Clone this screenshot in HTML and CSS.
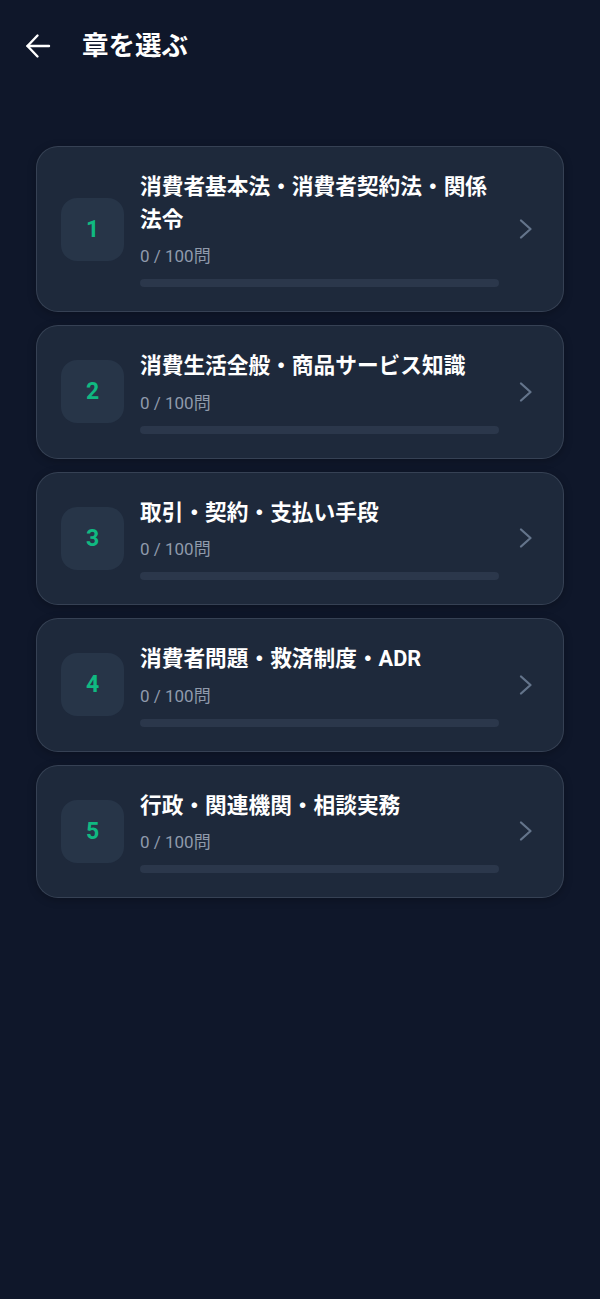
FILE: index.html
```html
<!DOCTYPE html>
<html lang="ja">
<head>
<meta charset="utf-8">
<title>章を選ぶ</title>
<link rel="stylesheet" href="styles.css">
</head>
<body>
<header class="topbar">
  <svg class="back" width="26" height="26" viewBox="0 0 26 26" fill="none" stroke="#ffffff" stroke-width="2.4" stroke-linecap="round" stroke-linejoin="round">
    <path d="M2.5 13H24"/>
    <path d="M12.5 2.5L2.5 13L12.5 23.5"/>
  </svg>
  <h1 class="title">章を選ぶ</h1>
</header>
<main class="list">
  <div class="card">
    <div class="num">1</div>
    <div class="info">
      <div class="name">消費者基本法・消費者契約法・関係法令</div>
      <div class="count">0 / 100問</div>
      <div class="bar"></div>
    </div>
    <svg class="chev" width="24" height="24" viewBox="0 0 24 24" fill="none" stroke="#64748b" stroke-width="2.3" stroke-linecap="round" stroke-linejoin="round"><path d="M6 3.5L15.5 12L6 20.5"/></svg>
  </div>
  <div class="card">
    <div class="num">2</div>
    <div class="info">
      <div class="name">消費生活全般・商品サービス知識</div>
      <div class="count">0 / 100問</div>
      <div class="bar"></div>
    </div>
    <svg class="chev" width="24" height="24" viewBox="0 0 24 24" fill="none" stroke="#64748b" stroke-width="2.3" stroke-linecap="round" stroke-linejoin="round"><path d="M6 3.5L15.5 12L6 20.5"/></svg>
  </div>
  <div class="card">
    <div class="num">3</div>
    <div class="info">
      <div class="name">取引・契約・支払い手段</div>
      <div class="count">0 / 100問</div>
      <div class="bar"></div>
    </div>
    <svg class="chev" width="24" height="24" viewBox="0 0 24 24" fill="none" stroke="#64748b" stroke-width="2.3" stroke-linecap="round" stroke-linejoin="round"><path d="M6 3.5L15.5 12L6 20.5"/></svg>
  </div>
  <div class="card">
    <div class="num">4</div>
    <div class="info">
      <div class="name">消費者問題・救済制度・ADR</div>
      <div class="count">0 / 100問</div>
      <div class="bar"></div>
    </div>
    <svg class="chev" width="24" height="24" viewBox="0 0 24 24" fill="none" stroke="#64748b" stroke-width="2.3" stroke-linecap="round" stroke-linejoin="round"><path d="M6 3.5L15.5 12L6 20.5"/></svg>
  </div>
  <div class="card">
    <div class="num">5</div>
    <div class="info">
      <div class="name">行政・関連機関・相談実務</div>
      <div class="count">0 / 100問</div>
      <div class="bar"></div>
    </div>
    <svg class="chev" width="24" height="24" viewBox="0 0 24 24" fill="none" stroke="#64748b" stroke-width="2.3" stroke-linecap="round" stroke-linejoin="round"><path d="M6 3.5L15.5 12L6 20.5"/></svg>
  </div>
</main>
</body>
</html>
```
FILE: styles.css
```css
html, body {
  margin: 0;
  padding: 0;
}
body {
  background: #0f172a;
  min-height: 1299px;
  font-family: Roboto, "Noto Sans", "Noto Sans CJK JP", sans-serif;
  color: #ffffff;
}
.topbar {
  height: 92px;
  display: flex;
  align-items: center;
  padding-left: 25px;
  gap: 31px;
}
.back {
  display: block;
  flex: none;
}
.title {
  margin: 0;
  font-size: 26.5px;
  font-weight: 700;
  line-height: 1;
  font-family: Roboto, "Noto Sans CJK JP", sans-serif;
}
.list {
  margin-top: 54px;
  padding: 0 36px;
  display: flex;
  flex-direction: column;
  gap: 13px;
}
.card {
  background: #1e293b;
  border: 1px solid rgba(148, 163, 184, 0.2);
  border-radius: 22px;
  padding: 24px;
  display: flex;
  align-items: center;
  gap: 16px;
  box-shadow: 0 2px 8px rgba(0, 0, 0, 0.25);
}
.num {
  flex: none;
  width: 63px;
  height: 63px;
  border-radius: 16px;
  background: #273548;
  display: flex;
  align-items: center;
  justify-content: center;
  color: #10b981;
  font-size: 23px;
  font-weight: 700;
}
.info {
  flex: 1;
  min-width: 0;
}
.name {
  font-size: 21.7px;
  font-weight: 700;
  line-height: 32.5px;
  color: #ffffff;
  font-family: Roboto, "Noto Sans CJK JP", sans-serif;
}
.count {
  margin-top: 9px;
  font-size: 17px;
  line-height: 22px;
  color: #8f9aab;
}
.bar {
  margin-top: 12px;
  height: 8px;
  border-radius: 4px;
  background: #2b374b;
}
.chev {
  flex: none;
  display: block;
}
```
